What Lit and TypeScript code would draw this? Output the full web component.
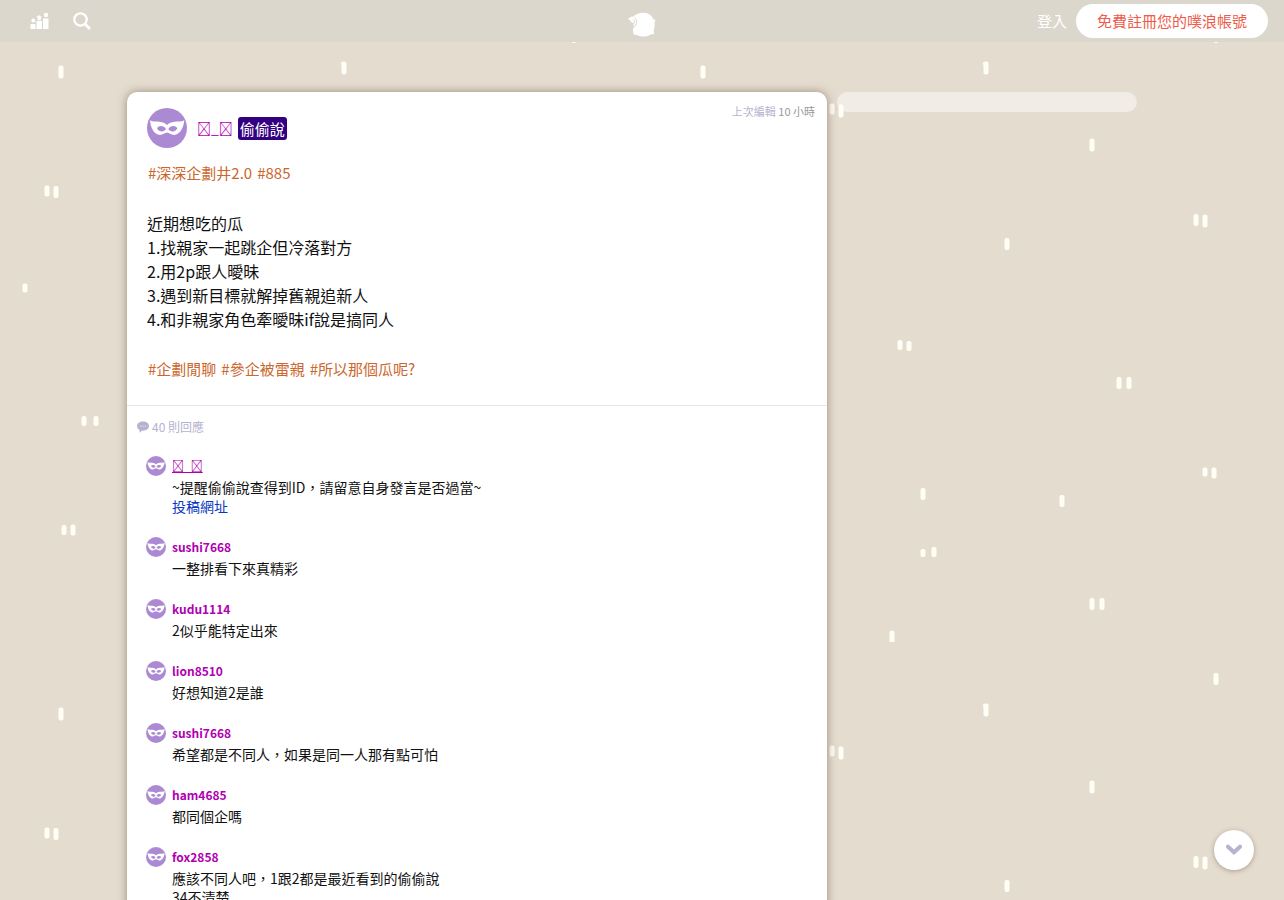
import { LitElement, html, css, svg, nothing } from "lit";
import { customElement, property } from "lit/decorators.js";

interface Reply {
  name: string;
  lines: string[];
  link?: string;
  owner?: boolean;
}

const OWNER = "\u{F0000}_\u{F0000}";

const REPLIES: Reply[] = [
  { name: OWNER, lines: ["~提醒偷偷說查得到ID，請留意自身發言是否過當~"], link: "投稿網址", owner: true },
  { name: "sushi7668", lines: ["一整排看下來真精彩"] },
  { name: "kudu1114", lines: ["2似乎能特定出來"] },
  { name: "lion8510", lines: ["好想知道2是誰"] },
  { name: "sushi7668", lines: ["希望都是不同人，如果是同一人那有點可怕"] },
  { name: "ham4685", lines: ["都同個企嗎"] },
  { name: "fox2858", lines: ["應該不同人吧，1跟2都是最近看到的偷偷說", "34不清楚"] },
];

const BODY = [
  "近期想吃的瓜",
  "1.找親家一起跳企但冷落對方",
  "2.用2p跟人曖昧",
  "3.遇到新目標就解掉舊親追新人",
  "4.和非親家角色牽曖昧if說是搞同人",
];

/* Rain strokes of one wallpaper tile: centre x, centre y, height */
const STROKES: [number, number, number][] = [
  [61, 72, 13], [344, 68, 13], [190, 109, 11], [199, 111, 13],
  [450, 145, 13], [554, 220, 12], [563, 221, 13], [365, 244, 12],
  [47, 191, 11], [56, 192, 12], [25, 288, 9], [258, 345, 10],
  [267, 346, 10], [477, 383, 12], [487, 383, 12], [84, 421, 10],
  [96, 421, 10], [563, 472, 9], [572, 473, 11], [281, 494, 12],
  [420, 501, 12], [64, 530, 10], [73, 530, 11], [281, 553, 8],
  [292, 552, 10], [450, 604, 12], [460, 604, 12], [250, 637, 13],
  [574, 37, 12],
];

@customElement("rain-wallpaper")
class RainWallpaper extends LitElement {
  static styles = css`
    :host { display: block; }
    svg { display: block; width: 100%; height: 100%; }
  `;
  render() {
    return html`<svg aria-hidden="true">
      <defs>
        <pattern id="rain" width="642" height="642" patternUnits="userSpaceOnUse">
          ${STROKES.map(([x, y, h]) => svg`<rect x=${x - 2.5} y=${y - h / 2} width="5" height=${h} rx="2" fill="#fffef4"/>`)}
          <path d="M340.800 62.500l3-.8v3.500h-2.500z" fill="#fffef4"/>
        </pattern>
      </defs>
      <rect width="100%" height="100%" fill="url(#rain)" />
    </svg>`;
  }
}

@customElement("mask-avatar")
class MaskAvatar extends LitElement {
  static styles = css`
    :host { display: block; flex: none; }
    svg { display: block; width: 100%; height: 100%; }
  `;
  render() {
    return html`<svg viewBox="0 0 40 40" aria-hidden="true">
      <circle cx="20" cy="20" r="20" fill="#ac8ad3" />
      <path fill="#fff" fill-rule="evenodd" d="M3 12.200C6 14 9 13.300 12.500 13.700c3.500.4 5.500 1.300 7.500 3.300 2-2 4-2.900 7.500-3.300 3.500-.4 6.500.3 9.800-1.500-.6 6-3.300 13.300-9 14.600-3.800.8-6-2.300-8.300-2.300s-4.500 3.100-8.300 2.300C6 25.500 3.600 18.200 3 12.200zM10 20.200c1.800 4 7 4.400 9 .8-1.800-3.600-7-4.200-9-.8zM30.300 20.200c-1.800 4-7 4.400-9 .8 1.800-3.600 7-4.200 9-.8z" />
    </svg>`;
  }
}

@customElement("plurk-reply")
class PlurkReply extends LitElement {
  @property({ attribute: false }) reply!: Reply;

  static styles = css`
    :host { display: flex; gap: 6px; align-items: flex-start; }
    .avatar { width: 20px; height: 20px; margin-top: 1px; }
    .name {
      display: block;
      width: fit-content;
      font-size: 12px;
      line-height: 22px;
      font-weight: 700;
      color: #b000b0;
      text-decoration: none;
    }
    .owner { font-weight: 400; text-decoration: underline; text-decoration-skip-ink: none; }
    .text { margin: 1px 0 0; font-size: 14px; line-height: 19px; color: #111; }
    .text a { color: #0a36c4; text-decoration: none; }
  `;
  render() {
    const r = this.reply;
    return html`
      <mask-avatar class="avatar"></mask-avatar>
      <div>
        <a class="name ${r.owner ? "owner" : ""}" href="#user">${r.name}</a>
        <p class="text">${r.lines.map((l, i) => html`${i ? html`<br />` : nothing}${l}`)}${r.link ? html`<br /><a href="#link">${r.link}</a>` : nothing}</p>
      </div>
    `;
  }
}

@customElement("app-root")
class AppRoot extends LitElement {
  static styles = css`
    :host {
      display: block;
      position: relative;
      height: 100vh;
      overflow: hidden;
      background: #e5dcd0;
      font-family: "Noto Sans CJK TC", sans-serif;
      color: #111;
    }
    a { text-decoration: none; }
    .wallpaper { position: absolute; inset: 0; }
    .scroller {
      position: relative;
      box-sizing: border-box;
      height: 100%;
      overflow-y: auto;
      scrollbar-width: none;
    }
    .bar {
      position: sticky;
      top: 0;
      z-index: 2;
      box-sizing: border-box;
      height: 42px;
      padding: 0 16px 0 30px;
      display: grid;
      grid-template-columns: 1fr auto 1fr;
      align-items: center;
      background: #dbd7cc;
    }
    .left, .right { display: flex; align-items: center; }
    .left { gap: 24px; }
    .right { justify-content: flex-end; gap: 9px; }
    .left a, .logo { display: block; }
    .left svg, .logo svg { display: block; }
    .logo { padding-top: 8px; margin-right: 14px; }
    .login { font-size: 15px; line-height: 22px; color: #fff; }
    .signup {
      padding: 0 21px;
      border-radius: 17px;
      background: #fff;
      font-size: 15px;
      line-height: 34px;
      color: #ee5b49;
    }
    .page {
      display: flex;
      align-items: flex-start;
      gap: 10px;
      max-width: 1010px;
      margin: 0 auto;
      padding: 50px 20px 0 0;
    }
    .card {
      flex: 7;
      background: #fff;
      border-radius: 10px;
      box-shadow: 0 0 10px rgba(80, 60, 30, 0.5);
    }
    .side {
      flex: 3;
      height: 20px;
      border-radius: 10px;
      background: rgba(255, 255, 255, 0.45);
    }
    .plurk { padding: 16px 12px 24px 20px; border-bottom: 1px solid #e6e6e6; }
    .head { display: flex; gap: 10px; }
    .avatar { width: 40px; height: 40px; }
    .who { flex: 1; display: flex; align-items: center; gap: 5px; }
    .user { font-size: 14px; line-height: 23px; color: #b000b0; }
    .badge {
      padding: 0 2px;
      border-radius: 3px;
      background: #320080;
      color: #fff;
      font-size: 15px;
      line-height: 23px;
    }
    .time { margin: -6px 0 0; font-size: 11px; line-height: 18px; color: #999; }
    .time span { color: #b4b3d0; }
    .tags { display: flex; gap: 5px; margin: 13px 0 0 1px; font-size: 15px; line-height: 24px; }
    .tags a { color: #cb662c; }
    .body { margin: 26px 0 0; font-size: 16px; line-height: 24px; }
    .body + .tags { margin-top: 26px; }
    .count {
      display: flex;
      align-items: center;
      gap: 3px;
      margin: 0;
      padding: 12px 10px 0;
      font-size: 12px;
      line-height: 18px;
      font-weight: 400;
      color: #b4b3d0;
    }
    .replies { display: grid; gap: 20px; list-style: none; margin: 0; padding: 19px 19px 20px; }
    .down {
      position: absolute;
      right: 30px;
      bottom: 30px;
      z-index: 3;
      width: 40px;
      height: 40px;
      padding: 0;
      display: grid;
      place-items: center;
      border: 0;
      border-radius: 50%;
      background: #fff;
      box-shadow: 0 1px 5px rgba(80, 60, 30, 0.4);
    }
  `;

  private tags(list: string[]) {
    return html`<div class="tags">${list.map((t) => html`<a href="#tag">${t}</a>`)}</div>`;
  }

  private toEnd() {
    const s = this.renderRoot.querySelector(".scroller");
    s?.scrollTo({ top: s.scrollHeight, behavior: "smooth" });
  }

  render() {
    return html`
      <rain-wallpaper class="wallpaper"></rain-wallpaper>
      <div class="scroller">
        <header class="bar">
          <nav class="left">
            <a href="#top" aria-label="排行">
              <svg width="19" height="18" viewBox="0 0 19 18" fill="#fff">
                <path d="M.5 12h5v5h-5zM6.500 9h5.500v8H6.500zM13 6.500h5.500V17H13z" />
                <circle cx="3.300" cy="8.500" r="2" /><circle cx="16" cy="3" r="2.200" />
                <path d="M9 2.500l1 1.700 2 .3-1.300 1.500.3 2.200H7.500L7.700 6 6.200 4.500l2-.3z" />
              </svg>
            </a>
            <a href="#search" aria-label="搜尋">
              <svg width="18" height="18" viewBox="0 0 18 18" fill="none" stroke="#fff">
                <circle cx="7.500" cy="7.500" r="6.200" stroke-width="2.300" />
                <path d="M12 12l5 5" stroke-width="2.800" />
              </svg>
            </a>
          </nav>
          <a class="logo" href="#home" aria-label="Plurk">
            <svg width="28" height="26" viewBox="0 0 28 26">
              <path fill="#fff" d="M5 5C7.500 2 12 .7 16 .8c4.500.2 8.300 3 9.500 7l2-.4-1 3.300c.5 3.500-.2 6-.8 7.300l.3 4-3.300.4c-4 2.700-9.500 2.700-13 .8l-4-.7-.9-4.700.9-2z" />
              <path fill="#fff" d="M0 6.500l2.500-1 1.700-1.600L6.500 8l-.6 3.500-2-1z" />
              <path fill="none" stroke="#dbd7cc" d="M6.500 5.500c3 2 3 7.500-1 9.500M5 7.500c2 .6 2 3.800 0 4.700" />
            </svg>
          </a>
          <div class="right">
            <a class="login" href="#login">登入</a>
            <a class="signup" href="#signup">免費註冊您的噗浪帳號</a>
          </div>
        </header>
        <main class="page">
          <article class="card">
            <section class="plurk">
              <div class="head">
                <mask-avatar class="avatar"></mask-avatar>
                <div class="who">
                  <a class="user" href="#user">${OWNER}</a>
                  <span class="badge">偷偷說</span>
                </div>
                <p class="time"><span>上次編輯</span> 10 小時</p>
              </div>
              ${this.tags(["#深深企劃井2.0", "#885"])}
              <p class="body">${BODY.map((l, i) => html`${i ? html`<br />` : nothing}${l}`)}</p>
              ${this.tags(["#企劃閒聊", "#參企被雷親", "#所以那個瓜呢?"])}
            </section>
            <h2 class="count">
              <svg width="12" height="12" viewBox="0 0 12 12" aria-hidden="true">
                <path fill="#b4b3d0" d="M6 .5c3.400 0 6 2 6 4.600S9.400 9.800 6 9.800l-1 0L2.500 11.700 2.600 9C1 8.200 0 6.800 0 5.100 0 2.500 2.600.5 6 .5z" />
                <path stroke="#fff" stroke-opacity=".7" stroke-dasharray="1.200 1" d="M3.300 5.200h5.500" />
              </svg>
              40 則回應
            </h2>
            <ul class="replies">
              ${REPLIES.map((r) => html`<li><plurk-reply .reply=${r}></plurk-reply></li>`)}
            </ul>
          </article>
          <aside class="side"></aside>
        </main>
      </div>
      <button class="down" aria-label="到最後" @click=${this.toEnd}>
        <svg width="18" height="12" viewBox="0 0 18 12" fill="none" stroke="#b4b3d0" stroke-width="4" stroke-linecap="round">
          <path d="M3 2.700l6 5.600 6-5.600" />
        </svg>
      </button>
    `;
  }
}
